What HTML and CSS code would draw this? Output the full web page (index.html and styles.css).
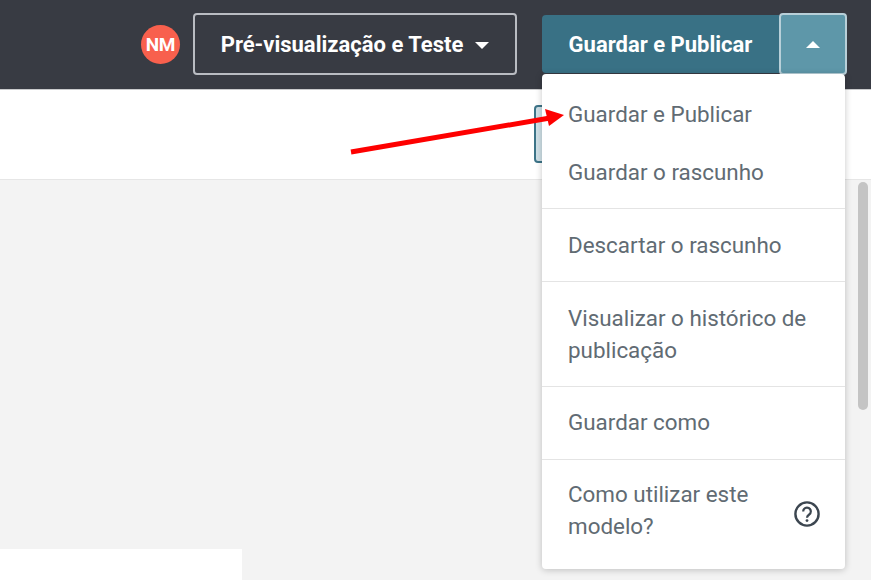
FILE: index.html
```html
<!DOCTYPE html>
<html lang="pt">
<head>
<meta charset="utf-8">
<title>Guardar e Publicar</title>
<link rel="stylesheet" href="styles.css">
</head>
<body>
<div class="page">
  <header class="topbar">
    <span class="avatar">NM</span>
    <button class="preview-btn">Pré-visualização e Teste<span class="caret-down"></span></button>
    <div class="publish-group">
      <button class="publish-btn">Guardar e Publicar</button>
      <button class="publish-toggle"><span class="caret-up"></span></button>
    </div>
  </header>
  <div class="toolbar">
    <span class="tool-btn"></span>
  </div>
  <main class="canvas">
    <div class="canvas-body">
      <div class="canvas-main"><div class="sheet"></div></div>
      <div class="scrolltrack"><div class="scrollthumb"></div></div>
    </div>
  </main>
  <nav class="menu">
    <div class="group group-a">
      <a class="item">Guardar e Publicar</a>
      <a class="item">Guardar o rascunho</a>
    </div>
    <div class="group group-b"><a class="line">Descartar o rascunho</a></div>
    <div class="group group-c"><a class="line">Visualizar o histórico de publicação</a></div>
    <div class="group group-d"><a class="line">Guardar como</a></div>
    <div class="group group-e">
      <a class="line help-text">Como utilizar este modelo?</a>
      <svg class="help-icon" viewBox="0 0 26 26" aria-hidden="true">
        <circle cx="13" cy="13" r="11.6" fill="none" stroke="#3c4650" stroke-width="2.4"/>
        <path d="M9.2 10.4a3.8 3.8 0 1 1 6 3.1c-1.4 1-2.2 1.6-2.2 3.2" fill="none" stroke="#3c4650" stroke-width="2.2"/>
        <circle cx="13" cy="19.6" r="1.4" fill="#3c4650"/>
      </svg>
    </div>
  </nav>
  <svg class="arrow" viewBox="0 0 871 580" aria-hidden="true">
    <line x1="351" y1="152" x2="550" y2="118" stroke="#fe0000" stroke-width="5"/>
    <polygon points="564,115 545,109 549,126" fill="#fe0000"/>
  </svg>
</div>
</body>
</html>
```
FILE: styles.css
```css
* { box-sizing: border-box; }
html, body { margin: 0; padding: 0; }
body { font-family: Roboto, "Liberation Sans", sans-serif; background: #f3f3f3; }
.page { position: relative; width: 871px; height: 580px; overflow: hidden; display: flex; flex-direction: column; }

.topbar { height: 90px; flex: none; background: #383b43; border-bottom: 1px solid #c9cacc; display: flex; align-items: center; justify-content: flex-end; padding-right: 24px; padding-bottom: 1px; }
.avatar { width: 39px; height: 39px; border-radius: 50%; background: #f8604d; color: #fff; font-size: 19px; font-weight: 700; letter-spacing: -0.3px; display: flex; align-items: center; justify-content: center; margin-right: 13px; margin-top: 1px; }
.preview-btn { width: 324px; height: 62px; background: transparent; border: 2px solid #b9bcc2; border-radius: 4px; color: #fff; font: 700 22px Roboto, sans-serif; display: flex; align-items: center; justify-content: center; margin-right: 25px; padding: 0; }
.caret-down { width: 0; height: 0; border-left: 7px solid transparent; border-right: 7px solid transparent; border-top: 7px solid #fff; margin-left: 12px; margin-top: 2px; }
.publish-group { display: flex; align-items: center; }
.publish-btn { width: 237px; height: 58px; background: #397185; border: 0; border-radius: 4px 0 0 4px; color: #fff; font: 700 22px Roboto, sans-serif; padding: 0; }
.publish-toggle { width: 68px; height: 62px; background: #5e97a9; border: 2px solid #b8d0d9; border-radius: 4px; display: flex; align-items: center; justify-content: center; padding: 0; }
.caret-up { width: 0; height: 0; border-left: 7px solid transparent; border-right: 7px solid transparent; border-bottom: 7px solid #fff; }

.toolbar { height: 90px; flex: none; background: #fff; border-bottom: 1px solid #e6e6e6; display: flex; justify-content: flex-end; align-items: flex-start; padding-top: 15px; padding-right: 321px; }
.tool-btn { width: 16px; height: 58px; background: #cfe0e7; border: 2px solid #3d7488; border-radius: 4px; }

.canvas { flex: 1; min-height: 0; background: #f3f3f3; }
.canvas-body { height: 100%; display: flex; }
.canvas-main { flex: 1; display: flex; align-items: flex-end; }
.sheet { width: 242px; height: 31px; background: #fff; }
.scrolltrack { width: 13px; padding-top: 2px; }
.scrollthumb { width: 10px; height: 228px; background: #c4c4c4; border-radius: 5px; }

.menu { position: absolute; left: 542px; top: 74px; width: 303px; height: 495px; background: #fff; border-radius: 4px; box-shadow: 0 1px 7px rgba(0,0,0,.22); color: #616b73; font-size: 22.4px; line-height: 32px; }
.group { padding-left: 26px; padding-right: 25px; border-bottom: 1px solid #e4e4e4; }
.group:last-child { border-bottom: 0; }
.item { display: block; padding: 13px 0; }
.line { display: block; }
.group-a { padding-top: 11px; height: 135px; }
.group-b { padding-top: 20px; height: 73px; }
.group-c { padding-top: 20px; height: 105px; }
.group-d { padding-top: 19px; height: 73px; }
.group-e { padding-top: 18px; display: flex; align-items: center; justify-content: space-between; padding-bottom: 27px; }
.help-text { width: 200px; }
.help-icon { width: 26px; height: 26px; flex: none; margin-top: 8px; }

.arrow { position: absolute; left: 0; top: 0; width: 871px; height: 580px; pointer-events: none; }
```
